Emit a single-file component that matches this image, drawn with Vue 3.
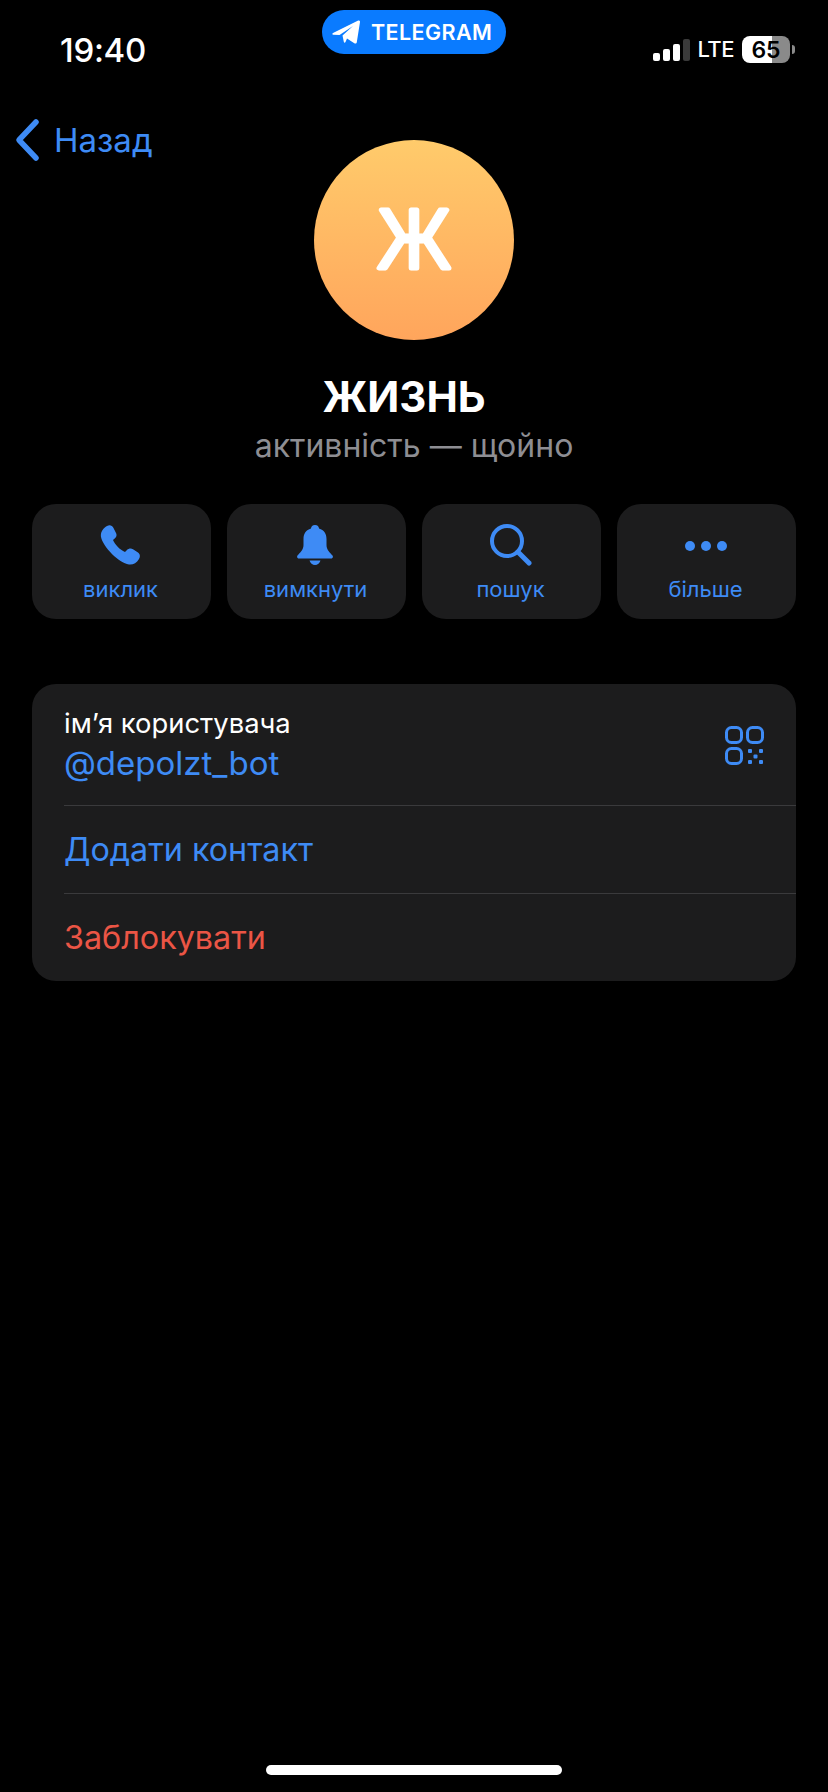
<script setup>
const actions = [
  { id: 'call', label: 'виклик' },
  { id: 'mute', label: 'вимкнути' },
  { id: 'search', label: 'пошук' },
  { id: 'more', label: 'більше' },
]
const signalBars = [8, 12, 17, 22]
</script>

<template>
  <div class="screen">
    <header class="status">
      <span class="time">19:40</span>
      <div class="island">
        <svg class="plane" width="28" height="24" viewBox="0 0 28 24">
          <path fill="#fff" d="M1 13 26.200.6C27.300.1 28.200.9 28 2L24.800 22.300C24.600 23.600 23.400 23.900 22.300 23.200L15 18.500 13.500 22C13 23 12 22.800 11.800 21.800L10.500 15.500 21 6 7.500 15 1.200 14.800C.2 14.700 0 13.500 1 13Z" />
        </svg>
        <span>TELEGRAM</span>
      </div>
      <div class="status-right">
        <div class="signal">
          <i v-for="(h, i) in signalBars" :key="i" :class="{ off: i === 3 }" :style="{ height: h + 'px' }"></i>
        </div>
        <span class="lte">LTE</span>
        <div class="battery">
          <div class="battery-body"><span>65</span></div>
          <div class="battery-tip"></div>
        </div>
      </div>
    </header>

    <a class="back">
      <svg width="26" height="44" viewBox="0 0 26 44">
        <path d="M22 4 5 22l17 18" fill="none" stroke="#3e8bf5" stroke-width="5.500" stroke-linecap="round" stroke-linejoin="round" />
      </svg>
      <span>Назад</span>
    </a>

    <section class="hero">
      <div class="avatar">
        <svg width="200" height="200" viewBox="0 0 200 200">
          <text x="100" y="98" text-anchor="middle" class="avatar-letter">Ж</text>
        </svg>
      </div>
      <h1>ЖИЗНЬ</h1>
      <p>активність — щойно</p>
    </section>

    <nav class="actions">
      <button v-for="a in actions" :key="a.id" class="action">
        <span class="action-icon">
          <svg v-if="a.id === 'call'" class="shift-left" width="40" height="40" viewBox="0 0 40 40">
            <path fill="#3e8bf5" d="M7 1C10-.5 12 .5 13.500 3L16 8C17 10 16.500 12 15 13.200L13 15C14.500 19 20 25 25 27L27 25C28.500 23.500 31 23 33 24.200L38 27.500C40 29 40.500 31.500 39 34 36.500 38 33 40 29 39.500 19 38 3 22 1 12 .2 7.500 3 3 7 1Z" />
          </svg>
          <svg v-else-if="a.id === 'mute'" class="shift-left" width="36" height="40" viewBox="0 0 36 40">
            <path fill="#3e8bf5" d="M18 0C20.500 0 22 1.800 22 3.600 27 5 29.500 9 29.500 14V20C29.500 25 33 27.500 35.500 30.500 36.500 31.800 35.500 33.500 34 33.500H2C.5 33.500-.5 31.800 .5 30.500 3 27.500 6.500 25 6.500 20V14C6.500 9 9 5 14 3.600 14 1.800 15.500 0 18 0Z" />
            <path fill="#3e8bf5" d="M12.500 35.500H23.500C22.800 38.200 20.500 40 18 40 15.500 40 13.200 38.200 12.500 35.500Z" />
          </svg>
          <svg v-else-if="a.id === 'search'" width="42" height="42" viewBox="0 0 42 42">
            <circle cx="17" cy="17" r="15" fill="none" stroke="#3e8bf5" stroke-width="4" />
            <path d="M28 28 39 39" fill="none" stroke="#3e8bf5" stroke-width="5" stroke-linecap="round" />
          </svg>
          <svg v-else width="42" height="42" viewBox="0 0 42 42">
            <circle cx="5" cy="22" r="5" fill="#3e8bf5" />
            <circle cx="21" cy="22" r="5" fill="#3e8bf5" />
            <circle cx="37" cy="22" r="5" fill="#3e8bf5" />
          </svg>
        </span>
        <span class="action-label">{{ a.label }}</span>
      </button>
    </nav>

    <section class="card">
      <div class="row row-user">
        <div class="user-text">
          <span class="user-caption">імʼя користувача</span>
          <span class="user-name">@depolzt_bot</span>
        </div>
        <svg class="qr" width="40" height="39" viewBox="0 0 40 39">
          <g fill="none" stroke="#3e8bf5" stroke-width="3">
            <rect x="1.500" y="1.500" width="15" height="15" rx="5" />
            <rect x="22.500" y="1.500" width="15" height="15" rx="5" />
            <rect x="1.500" y="22.500" width="15" height="15" rx="5" />
          </g>
          <g fill="#3e8bf5">
            <rect x="23" y="23" width="4" height="4" rx="1" />
            <rect x="34" y="23" width="4" height="4" rx="1" />
            <rect x="28.500" y="28.500" width="4" height="4" rx="1" />
            <rect x="23" y="34" width="4" height="4" rx="1" />
            <rect x="34" y="34" width="4" height="4" rx="1" />
          </g>
        </svg>
      </div>
      <div class="row row-link">Додати контакт</div>
      <div class="row row-link danger">Заблокувати</div>
    </section>

    <div class="home-indicator"></div>
  </div>
</template>

<style>
html, body {
  background: #000;
}
</style>

<style scoped>
.screen {
  position: relative;
  display: flex;
  flex-direction: column;
  width: 828px;
  height: 1792px;
  overflow: hidden;
  background: #000;
  color: #fff;
  font-family: Inter, "Noto Sans", sans-serif;
}

.status {
  position: relative;
  display: flex;
  align-items: flex-start;
  justify-content: space-between;
  height: 140px;
  padding: 32px 33px 0 60px;
  box-sizing: border-box;
}

.time {
  font-size: 33px;
  font-weight: 500;
  line-height: 36px;
  letter-spacing: -0.3px;
}

.island {
  position: absolute;
  top: 10px;
  left: 322px;
  display: flex;
  align-items: center;
  gap: 11px;
  width: 184px;
  height: 44px;
  padding-left: 10px;
  box-sizing: border-box;
  border-radius: 22px;
  background: #0a7bff;
  font-size: 21.500px;
  font-weight: 600;
  letter-spacing: 0.4px;
}

.status-right {
  display: flex;
  align-items: center;
  height: 27px;
  margin-top: 4px;
}

.signal {
  display: flex;
  align-items: flex-end;
  gap: 3px;
  height: 24px;
  margin-bottom: 2px;
}

.signal i {
  width: 7px;
  border-radius: 2px;
  background: #fff;
}

.signal i.off {
  background: #3a3a3a;
}

.lte {
  margin: 0 8px 0 8px;
  font-size: 22px;
  font-weight: 500;
  line-height: 27px;
  letter-spacing: -0.5px;
}

.battery {
  display: flex;
  align-items: center;
  gap: 2px;
}

.battery-body {
  display: flex;
  align-items: center;
  justify-content: center;
  width: 48px;
  height: 27px;
  border-radius: 8px;
  background: linear-gradient(90deg, #fff 62%, #8a8a8a 62%);
  color: #000;
  font-size: 23px;
  font-weight: 600;
}

.battery-tip {
  width: 3px;
  height: 9px;
  border-radius: 0 3px 3px 0;
  background: #8a8a8a;
}

.back {
  position: absolute;
  top: 118px;
  left: 14px;
  display: flex;
  align-items: center;
  gap: 14px;
  color: #3e8bf5;
  font-size: 33px;
  line-height: 44px;
}

.hero {
  display: flex;
  flex-direction: column;
  align-items: center;
}

.avatar {
  width: 200px;
  height: 200px;
  border-radius: 50%;
  background: linear-gradient(180deg, #ffcb6b 0%, #ffa55c 100%);
}

.avatar-letter {
  font-family: Inter, sans-serif;
  font-size: 80px;
  font-weight: 300;
  fill: #fff;
  stroke: #fff;
  stroke-width: 5;
  stroke-linejoin: round;
  dominant-baseline: central;
}

.hero h1 {
  margin: 30px 20px 0 0;
  font-size: 42px;
  font-weight: 700;
  line-height: 54px;
}

.hero p {
  margin: 2px 0 0;
  color: #8e8e93;
  font-size: 32px;
  line-height: 40px;
}

.actions {
  display: grid;
  grid-template-columns: repeat(4, 179px);
  gap: 16px;
  margin: 38px 0 0 32px;
}

.action {
  display: flex;
  flex-direction: column;
  align-items: center;
  height: 115px;
  padding: 20px 2px 0 0;
  border: 0;
  border-radius: 24px;
  background: #1c1c1d;
  color: #3e8bf5;
  font-family: inherit;
}

.action-icon {
  display: flex;
  align-items: center;
  justify-content: center;
  height: 42px;
}

.shift-left {
  margin-right: 1px;
}

.action-label {
  margin-top: 9px;
  font-size: 22px;
  line-height: 28px;
}

.card {
  display: flex;
  flex-direction: column;
  width: 764px;
  margin: 65px 0 0 32px;
  border-radius: 24px;
  background: #1c1c1d;
  overflow: hidden;
}

.row {
  margin-left: 32px;
  box-sizing: border-box;
}

.row + .row {
  border-top: 1px solid #3a3a3c;
}

.row-user {
  display: flex;
  align-items: center;
  justify-content: space-between;
  height: 121px;
  padding-right: 32px;
}

.user-text {
  display: flex;
  flex-direction: column;
}

.user-caption {
  font-size: 27.400px;
  line-height: 36px;
}

.user-name {
  color: #3e8bf5;
  font-size: 33px;
  line-height: 44px;
}

.qr {
  margin-right: -1px;
  margin-top: 2px;
}

.row-link {
  height: 88px;
  color: #3e8bf5;
  font-size: 32.300px;
  line-height: 88px;
}

.row-link.danger {
  color: #eb5545;
}

.home-indicator {
  position: absolute;
  bottom: 17px;
  left: 266px;
  width: 296px;
  height: 10px;
  border-radius: 5px;
  background: #fff;
}
</style>
